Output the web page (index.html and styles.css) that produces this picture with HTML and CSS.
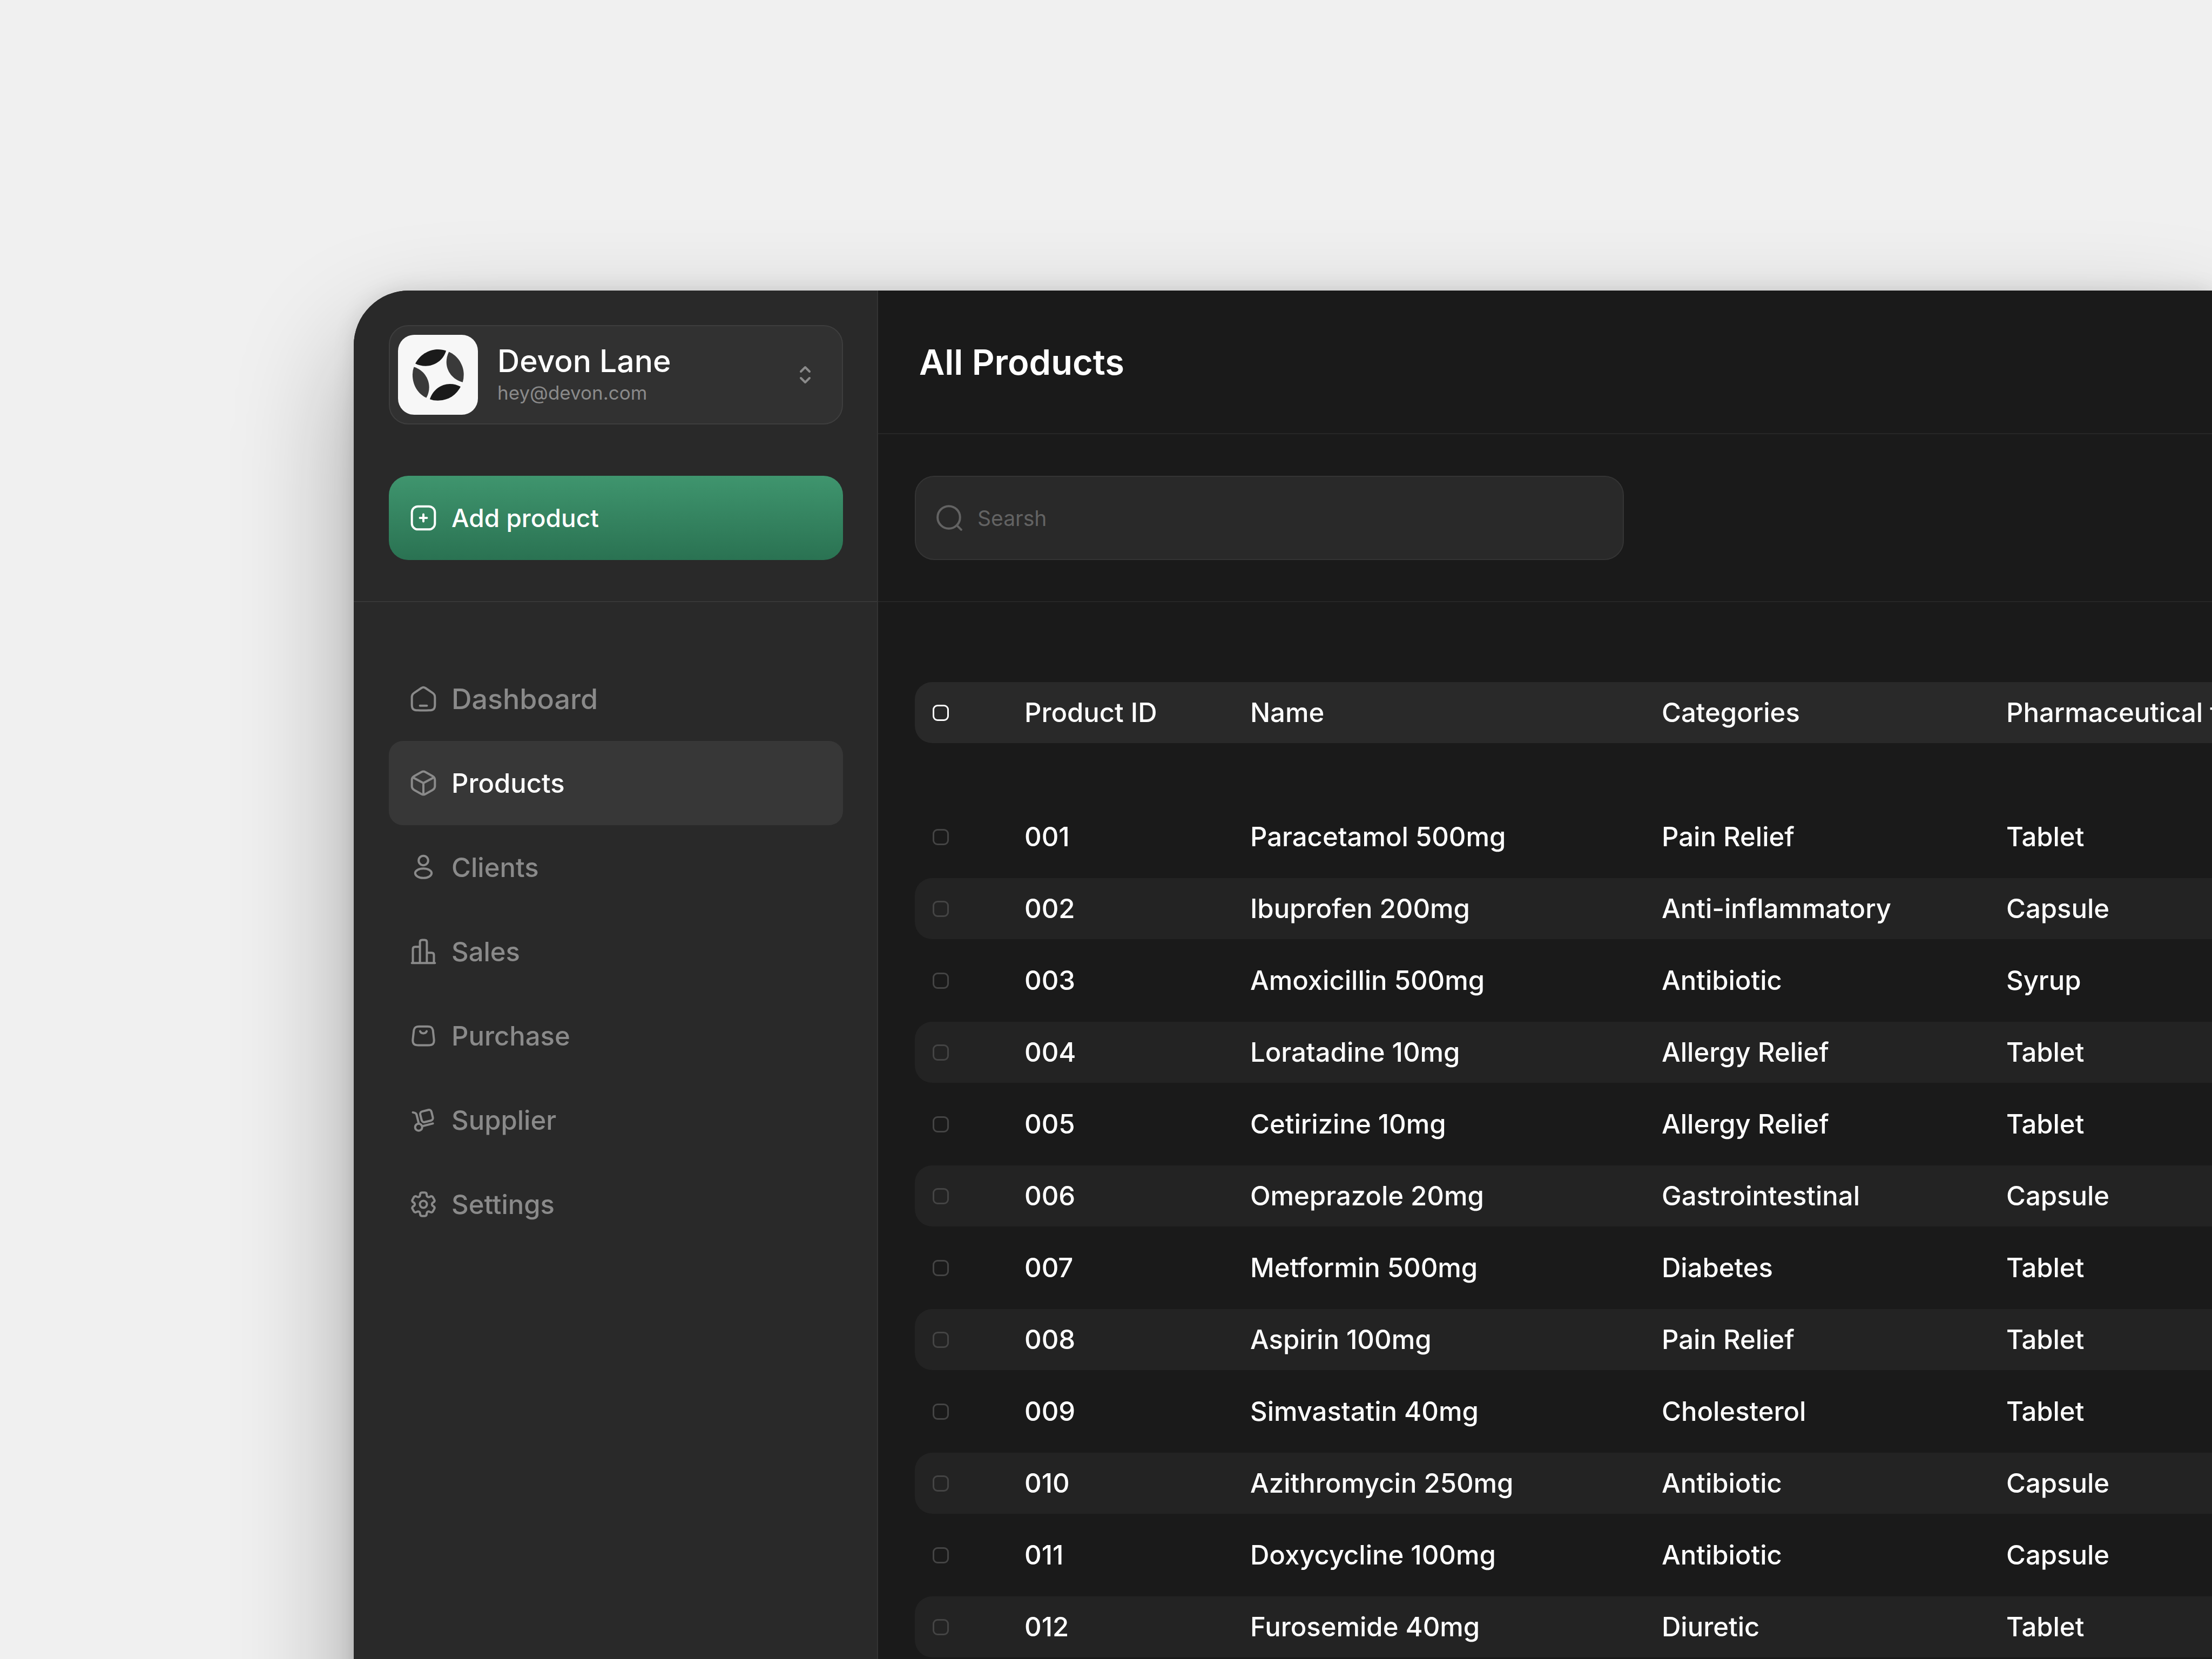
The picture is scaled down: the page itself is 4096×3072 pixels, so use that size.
FILE: index.html
```html
<!DOCTYPE html>
<html lang="en">
<head>
  <meta charset="UTF-8">
  <meta name="viewport" content="width=device-width, initial-scale=1">
  <title>All Products</title>
  <link rel="stylesheet" href="styles.css">
</head>
<body>

<div class="app">
  <aside class="sidebar">
    <div class="sidebar-top">
      <button class="account" type="button">
        <svg class="avatar" viewBox="0 0 231 231" aria-hidden="true">
          <path fill="#1a1a1a" d="M50 83C66 52 96 42 115 42q14 0 24 4c-8 28-34 44-59 44q-17 0-30-7z"/>
          <path fill="#3a3a3a" d="M147 49c26 11 43 38 43 66q0 12-3 22c-29-7-47-32-47-58q0-16 7-30z"/>
          <path fill="#1a1a1a" d="M181 150c-16 30-42 40-66 40q-13 0-23-4c8-26 32-44 58-44q17 0 31 8z"/>
          <path fill="#3a3a3a" d="M46 93c27 8 44 33 44 59q0 15-8 30C57 170 42 145 42 115q0-12 4-22z"/>
        </svg>
        <span class="account-text">
          <span class="account-name">Devon Lane</span>
          <span class="account-email">hey@devon.com</span>
        </span>
        <svg class="chevrons" viewBox="0 0 24 24" aria-hidden="true">
          <path d="M8 9l4-4 4 4M8 15l4 4 4-4"/>
        </svg>
      </button>

      <button class="add-btn" type="button">
        <svg class="icon" viewBox="0 0 24 24" aria-hidden="true">
          <rect x="4" y="4" width="16" height="16" rx="4.2"/>
          <path d="M12 9.6v4.8M9.6 12h4.8"/>
        </svg>
        Add product
      </button>
    </div>

    <nav class="nav">
      <a class="nav-link nav-link-lg" href="#">
        <svg class="icon" viewBox="0 0 24 24" aria-hidden="true">
          <path d="M12 4c.5 0 .9.15 1.4.5l4.9 3.3c1.2.8 1.7 1.6 1.7 3.1v5.1c0 3-1 4-4 4-2.6.1-5.4.1-8 0-3 0-4-1-4-4v-5.1c0-1.5.5-2.3 1.7-3.1l4.9-3.3c.5-.35.9-.5 1.4-.5z"/>
          <path d="M9.6 16.8h4.8"/>
        </svg>
        Dashboard
      </a>
      <a class="nav-link active" href="#" aria-current="page">
        <svg class="icon" viewBox="0 0 24 24" aria-hidden="true">
          <path d="M10.7 4.3c.9-.5 1.7-.5 2.6 0l5 2.8c1.2.7 1.7 1.4 1.7 2.7v4.4c0 1.3-.5 2-1.7 2.7l-5 2.8c-.9.5-1.7.5-2.6 0l-5-2.8C4.5 16.2 4 15.5 4 14.2V9.8c0-1.3.5-2 1.7-2.7z"/>
          <path d="M4.9 8.2 12 12l7.1-3.8M12 12v7.8"/>
        </svg>
        Products
      </a>
      <a class="nav-link" href="#">
        <svg class="icon" viewBox="0 0 24 24" aria-hidden="true">
          <circle cx="12" cy="7.3" r="3.3"/>
          <ellipse cx="12" cy="16.1" rx="5.7" ry="3.3"/>
        </svg>
        Clients
      </a>
      <a class="nav-link" href="#">
        <svg class="icon" viewBox="0 0 24 24" aria-hidden="true">
          <path d="M4 20h16M4.7 20V10.2q0-1.5 1.5-1.5h3.4M9.6 20V5.4q0-1.5 1.5-1.5h1.8q1.5 0 1.5 1.5V20M14.4 12.8h3.4q1.5 0 1.5 1.5V20"/>
        </svg>
        Sales
      </a>
      <a class="nav-link" href="#">
        <svg class="icon" viewBox="0 0 24 24" aria-hidden="true">
          <path d="M9 5.5h6c2.4 0 3.2.8 3.6 2.5l.7 6.2c.4 3.2-.7 4.4-4 4.4H8.7c-3.3 0-4.4-1.2-4-4.4L5.4 8C5.8 6.3 6.6 5.5 9 5.5z"/>
          <path d="M9.7 8.8c.4.9 1.2 1.5 2.3 1.5s1.9-.6 2.3-1.5"/>
        </svg>
        Purchase
      </a>
      <a class="nav-link" href="#">
        <svg class="icon" viewBox="0 0 24 24" aria-hidden="true">
          <path d="M4.7 6.7l1.2.3q1.1.3 1.4 1.4l1.5 6M11.4 16.2l7.2-1.8"/>
          <circle cx="8.7" cy="17" r="2.45"/>
          <rect x="10.2" y="5.4" width="8" height="7.6" rx="1.8" transform="rotate(-14 14.2 9.2)"/>
        </svg>
        Supplier
      </a>
      <a class="nav-link" href="#">
        <svg class="icon" viewBox="0 0 24 24" aria-hidden="true">
          <g transform="translate(12 12)">
            <circle r="2.45"/>
            <path d="M-2.3-6.6C-2.3-7.6-1.8-8.15-1-8.15L1-8.15C1.8-8.15 2.3-7.6 2.3-6.6
              C2.3-5.2 3.35-4.59 4.57-5.29C5.43-5.79 6.16-5.63 6.56-4.94L7.56-3.21C7.96-2.52 7.73-1.81 6.87-1.31
              C5.65-.61 5.65.61 6.87 1.31C7.73 1.81 7.96 2.52 7.56 3.21L6.56 4.94C6.16 5.63 5.43 5.79 4.57 5.29
              C3.35 4.59 2.3 5.2 2.3 6.6C2.3 7.6 1.8 8.15 1 8.15L-1 8.15C-1.8 8.15-2.3 7.6-2.3 6.6
              C-2.3 5.2-3.35 4.59-4.57 5.29C-5.43 5.79-6.16 5.63-6.56 4.94L-7.56 3.21C-7.96 2.52-7.73 1.81-6.87 1.31
              C-5.65.61-5.65-.61-6.87-1.31C-7.73-1.81-7.96-2.52-7.56-3.21L-6.56-4.94C-6.16-5.63-5.43-5.79-4.57-5.29
              C-3.35-4.59-2.3-5.2-2.3-6.6z"/>
          </g>
        </svg>
        Settings
      </a>
    </nav>
  </aside>

  <main class="main">
    <header class="page-header">
      <h1>All Products</h1>
    </header>

    <div class="toolbar">
      <label class="search">
        <svg class="icon" viewBox="0 0 24 24" aria-hidden="true">
          <circle cx="11.6" cy="11.6" r="7.8"/>
          <path d="M17.3 17.3l2.9 2.9"/>
        </svg>
        <input type="search" placeholder="Searsh" aria-label="Search products">
      </label>
    </div>

    <table class="products">
      <thead>
        <tr>
          <th><input type="checkbox" aria-label="Select all"></th>
          <th>Product ID</th>
          <th>Name</th>
          <th>Categories</th>
          <th>Pharmaceutical form</th>
        </tr>
      </thead>
      <tbody id="productRows">
        <!-- rows are filled in below -->
      </tbody>
    </table>
  </main>
</div>

<script>
  const products = [
    ['001', 'Paracetamol 500mg', 'Pain Relief', 'Tablet'],
    ['002', 'Ibuprofen 200mg', 'Anti-inflammatory', 'Capsule'],
    ['003', 'Amoxicillin 500mg', 'Antibiotic', 'Syrup'],
    ['004', 'Loratadine 10mg', 'Allergy Relief', 'Tablet'],
    ['005', 'Cetirizine 10mg', 'Allergy Relief', 'Tablet'],
    ['006', 'Omeprazole 20mg', 'Gastrointestinal', 'Capsule'],
    ['007', 'Metformin 500mg', 'Diabetes', 'Tablet'],
    ['008', 'Aspirin 100mg', 'Pain Relief', 'Tablet'],
    ['009', 'Simvastatin 40mg', 'Cholesterol', 'Tablet'],
    ['010', 'Azithromycin 250mg', 'Antibiotic', 'Capsule'],
    ['011', 'Doxycycline 100mg', 'Antibiotic', 'Capsule'],
    ['012', 'Furosemide 40mg', 'Diuretic', 'Tablet']
  ];

  document.getElementById('productRows').innerHTML = products.map(([id, name, category, form]) => `
    <tr>
      <td><input type="checkbox" aria-label="Select ${name}"></td>
      <td>${id}</td>
      <td>${name}</td>
      <td>${category}</td>
      <td>${form}</td>
    </tr>
  `).join('');
</script>

</body>
</html>
```
FILE: styles.css
```css
* {
  margin: 0;
  padding: 0;
  box-sizing: border-box;
}

body {
  height: 100vh;
  padding: 538px 0 0 655px;
  overflow: hidden;
  font-family: Inter, sans-serif;
  background-color: #f0f0f0;
  color: #fff;
}

button,
input {
  font-family: inherit;
  color: inherit;
}

/* The window runs off the right and bottom edges */
.app {
  display: flex;
  height: calc(100% + 200px);
  border-top-left-radius: 102px;
  background-color: #1a1a1a;
  box-shadow: 0 100px 220px rgba(0, 0, 0, 0.32), 0 0 40px rgba(0, 0, 0, 0.12);
}

.icon {
  width: 64px;
  height: 64px;
  flex-shrink: 0;
  fill: none;
  stroke: currentColor;
  stroke-width: 1.5;
  stroke-linecap: round;
  stroke-linejoin: round;
}

/* Sidebar */
.sidebar {
  flex: 0 0 971px;
  border-right: 2px solid #333;
  border-top-left-radius: 102px;
  background-color: #292929;
}

.sidebar-top {
  display: flex;
  flex-direction: column;
  gap: 95px;
  padding: 64px 63px 76px 65px;
  border-bottom: 2px solid #373737;
}

.account {
  display: flex;
  align-items: center;
  gap: 36px;
  height: 184px;
  padding: 0 44px 0 15px;
  border: 2px solid #3e3e3e;
  border-radius: 36px;
  background-color: #313131;
  text-align: left;
}

.avatar {
  width: 148px;
  height: 148px;
  border-radius: 30px;
  background-color: #f7f7f7;
}

.account-text {
  flex: 1;
  padding-bottom: 4px;
}

.account-name,
.account-email {
  display: block;
}

.account-name {
  font-size: 57px;
  line-height: 70px;
  font-weight: 500;
}

.account-email {
  font-size: 35px;
  line-height: 46px;
  color: #8a8a8a;
}

.chevrons {
  width: 48px;
  height: 48px;
  fill: none;
  stroke: #8a8a8a;
  stroke-width: 2;
  stroke-linecap: round;
  stroke-linejoin: round;
}

.add-btn {
  display: flex;
  align-items: center;
  gap: 20px;
  height: 156px;
  padding: 0 32px;
  border: none;
  border-radius: 36px;
  background: linear-gradient(#3f956e, #2a7252);
  font-size: 46px;
  font-weight: 500;
}

.nav {
  padding: 101px 63px 0 65px;
}

.nav-link {
  display: flex;
  align-items: center;
  gap: 20px;
  height: 156px;
  padding: 0 32px;
  border-radius: 26px;
  color: #8a8a8a;
  font-size: 49px;
  font-weight: 500;
  text-decoration: none;
}

.nav-link-lg {
  font-size: 52px;
}

.nav-link.active {
  background-color: #373737;
  color: #fff;
}

.nav-link.active .icon {
  color: #8a8a8a;
}

/* Main column */
.main {
  flex: 1;
  min-width: 0;
  overflow: hidden;
}

.page-header {
  display: flex;
  align-items: center;
  height: 266px;
  padding: 0 76px;
  border-bottom: 2px solid #262626;
}

.page-header h1 {
  font-size: 65px;
  font-weight: 600;
}

.toolbar {
  padding: 77px 68px 76px;
  border-bottom: 2px solid #262626;
}

.search {
  display: flex;
  align-items: center;
  gap: 20px;
  max-width: 1313px;
  height: 156px;
  padding: 0 30px;
  border: 2px solid #343434;
  border-radius: 36px;
  background-color: #292929;
  color: #636363;
}

.search input {
  flex: 1;
  border: none;
  outline: none;
  background: none;
  font-size: 39px;
}

.search input::placeholder {
  color: #636363;
}

/* Products table, wider than the window on purpose */
.products {
  display: block;
  min-width: 2900px;
  margin: 148px 0 0 68px;
  font-size: 49px;
  font-weight: 500;
}

.products thead,
.products tbody {
  display: grid;
  gap: 20px;
}

.products thead {
  margin-bottom: 117px;
}

.products tr {
  display: grid;
  grid-template-columns: 170px 418px 762px 638px 1fr;
  align-items: center;
  height: 113px;
  padding: 0 33px;
  border-radius: 32px;
}

.products thead tr {
  background-color: #292929;
}

.products tbody tr:nth-child(even) {
  background-color: #232323;
}

.products th,
.products td {
  display: flex;
  font-weight: 500;
  text-align: left;
  white-space: nowrap;
}

.products input {
  appearance: none;
  width: 30px;
  height: 30px;
  border: 3px solid #444;
  border-radius: 9px;
}

.products thead input {
  border-color: #fff;
}

.products input:checked {
  background-color: #3f956e;
}
```
